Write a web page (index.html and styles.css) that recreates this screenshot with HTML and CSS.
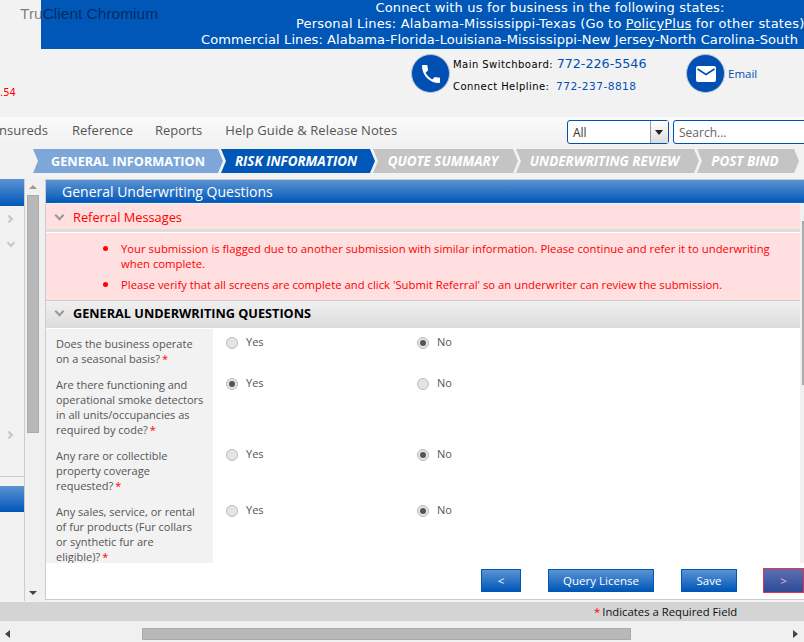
FILE: index.html
```html
<!DOCTYPE html>
<html lang="en">
<head>
    <meta charset="UTF-8">
    <title>General Underwriting Questions</title>
    <link rel="stylesheet" href="styles.css">
</head>
<body>
<div class="page">
    <div class="window-title">TruClient Chromium</div>

    <div class="banner">
        <div>Connect with us for business in the following states:</div>
        <div>Personal Lines: Alabama-Mississippi-Texas (Go to <u>PolicyPlus</u> for other states)</div>
        <div class="banner-wide">Commercial Lines: Alabama-Florida-Louisiana-Mississippi-New Jersey-North Carolina-South</div>
    </div>

    <div class="contact">
        <div class="stamp">.54</div>
        <div class="round-icon">
            <svg width="24" height="24" viewBox="0 0 24 24"><path fill="#fff" d="M6.6 10.8c1.4 2.8 3.8 5.100 6.600 6.600l2.200-2.200c.3-.3.700-.4 1-.2 1.100.4 2.300.6 3.600.6.600 0 1 .4 1 1V20c0 .6-.4 1-1 1C10.600 21 3 13.400 3 4c0-.6.4-1 1-1h3.500c.6 0 1 .4 1 1 0 1.300.2 2.500.6 3.600.1.300 0 .7-.2 1z"/></svg>
        </div>
        <div class="phones">
            <div class="phone-line">Main Switchboard: <span class="number-big">772-226-5546</span></div>
            <div class="phone-line">Connect Helpline: <span class="number">772-237-8818</span></div>
        </div>
        <div class="round-icon">
            <svg width="20" height="16" viewBox="0 0 20 16"><rect width="20" height="16" rx="2" fill="#fff"/><path d="M1.500 3l8.500 5.500L18.500 3" fill="none" stroke="#0050b3" stroke-width="1.600"/></svg>
        </div>
        <div class="email">Email</div>
    </div>

    <div class="menu">
        <span class="menu-item first">nsureds</span>
        <span class="menu-item second">Reference</span>
        <span class="menu-item">Reports</span>
        <span class="menu-item help">Help Guide &amp; Release Notes</span>
        <div class="combo">
            <span class="combo-text">All</span>
            <span class="combo-btn"></span>
        </div>
        <div class="search">Search...</div>
    </div>

    <div class="steps">
        <div class="step done">GENERAL INFORMATION</div>
        <div class="step current">RISK INFORMATION</div>
        <div class="step todo quote">QUOTE SUMMARY</div>
        <div class="step todo review">UNDERWRITING REVIEW</div>
        <div class="step todo bind">POST BIND</div>
    </div>

    <div class="main">
        <div class="side">
            <div class="side-panel">
                <div class="side-head"></div>
                <div class="chev-right one"></div>
                <div class="chev-down"></div>
                <div class="chev-right two"></div>
            </div>
            <div class="side-head second"></div>
        </div>

        <div class="vscroll">
            <span class="arrow-up"></span>
            <div class="vthumb"></div>
            <span class="arrow-down"></span>
        </div>

        <div class="content">
            <div class="content-title"><span>General Underwriting Questions</span></div>
            <div class="scroll-area">
                <div class="referral-head"><span class="chev-down small"></span>Referral Messages</div>
                <ul class="referral-list">
                    <li>Your submission is flagged due to another submission with similar information. Please continue and refer it to underwriting when complete.</li>
                    <li>Please verify that all screens are complete and click 'Submit Referral' so an underwriter can review the submission.</li>
                </ul>
                <div class="section-head"><span class="chev-down small"></span>GENERAL UNDERWRITING QUESTIONS</div>

                <div class="question">
                    <div class="q-label">Does the business operate on a seasonal basis?<span class="req">*</span></div>
                    <div class="q-opt"><span class="radio"></span>Yes</div>
                    <div class="q-opt"><span class="radio on"></span>No</div>
                </div>
                <div class="question">
                    <div class="q-label">Are there functioning and operational smoke detectors in all units/occupancies as required by code?<span class="req">*</span></div>
                    <div class="q-opt"><span class="radio on"></span>Yes</div>
                    <div class="q-opt"><span class="radio"></span>No</div>
                </div>
                <div class="question">
                    <div class="q-label">Any rare or collectible property coverage requested?<span class="req">*</span></div>
                    <div class="q-opt"><span class="radio"></span>Yes</div>
                    <div class="q-opt"><span class="radio on"></span>No</div>
                </div>
                <div class="question">
                    <div class="q-label">Any sales, service, or rental of fur products (Fur collars<br>or synthetic fur are<br>eligible)?<span class="req">*</span></div>
                    <div class="q-opt"><span class="radio"></span>Yes</div>
                    <div class="q-opt"><span class="radio on"></span>No</div>
                </div>
                <div class="inner-thumb"></div>
            </div>
            <div class="buttons">
                <button class="btn back">&lt;</button>
                <button class="btn query">Query License</button>
                <button class="btn save">Save</button>
                <button class="btn next">&gt;</button>
            </div>
        </div>
    </div>

    <div class="req-bar"><span class="req">*</span>Indicates a Required Field</div>

    <div class="hscroll">
        <span class="arrow-left"></span>
        <div class="hthumb"></div>
        <span class="arrow-right"></span>
    </div>
</div>
</body>
</html>
```

FILE: styles.css
```css
* {
    box-sizing: border-box;
}

html, body {
    margin: 0;
    padding: 0;
}

.page {
    position: relative;
    width: 804px;
    height: 642px;
    overflow: hidden;
    background: #f2f2f2;
    display: flex;
    flex-direction: column;
    font-family: "Open Sans", "Noto Sans", sans-serif;
}

.window-title {
    position: absolute;
    left: 20px;
    top: 5px;
    font-family: "Liberation Sans", sans-serif;
    font-size: 15.500px;
    color: rgba(0, 0, 0, 0.5);
}

/* top blue strip */
.banner {
    flex: none;
    height: 49px;
    margin-left: 41px;
    padding-left: 255px;
    background: #0057b8;
    color: #fff;
    font-family: "DejaVu Sans", sans-serif;
    font-size: 13px;
    line-height: 16px;
    text-align: center;
    white-space: nowrap;
    letter-spacing: 0.18px;
}

.banner-wide {
    margin-left: -255px;
    padding-right: 6px;
    text-align: right;
    letter-spacing: 0.1px;
}

.contact {
    flex: none;
    height: 68px;
    position: relative;
    display: flex;
    align-items: flex-start;
    padding: 5px 0 0 411px;
    font-family: "DejaVu Sans", sans-serif;
}

.stamp {
    position: absolute;
    left: 0;
    top: 38px;
    font-size: 10px;
    color: #f00;
}

.round-icon {
    width: 39px;
    height: 39px;
    border-radius: 50%;
    background: #0050b3;
    border: 1px solid #b8c4d4;
    display: flex;
    align-items: center;
    justify-content: center;
    flex: none;
}

.phones {
    width: 233px;
    margin-left: 3px;
    color: #000;
    font-size: 10px;
    letter-spacing: 0.45px;
}

.phone-line {
    height: 22px;
    line-height: 20px;
    white-space: nowrap;
}

.number-big {
    font-size: 12.700px;
    letter-spacing: 0;
    color: #0050b3;
}

.number {
    margin-left: 3px;
    font-size: 10.600px;
    color: #0050b3;
}

.email {
    margin: 12px 0 0 3px;
    font-family: "Open Sans", sans-serif;
    font-size: 11.500px;
    color: #0050b3;
}

.menu {
    flex: none;
    height: 26px;
    display: flex;
    align-items: center;
    background: linear-gradient(#fafafa, #f2f2f2);
    font-size: 13px;
    color: #555;
    white-space: nowrap;
}

.menu-item {
    margin-right: 23px;
}

.menu-item.first {
    margin-left: -1px;
    margin-right: 24px;
}

.menu-item.second {
    margin-right: 22px;
}

.menu-item.help {
    letter-spacing: 0.1px;
}

.combo {
    align-self: flex-start;
    flex: none;
    width: 102px;
    height: 24px;
    margin: 3px 4px 0 auto;
    display: flex;
    background: #fff;
    border: 1px solid #0050b3;
    border-radius: 3px;
    color: #333;
    font-size: 12px;
}

.combo-text {
    flex: 1;
    padding: 3px 0 0 5px;
}

.combo-btn {
    width: 18px;
    background: linear-gradient(#fff, #ddd);
    border-left: 1px solid #999;
    position: relative;
}

.combo-btn::after {
    content: "";
    position: absolute;
    left: 4px;
    top: 9px;
    border: 4px solid transparent;
    border-top: 5px solid #222;
}

/* runs past the right edge of the window */
.search {
    align-self: flex-start;
    flex: none;
    width: 140px;
    height: 24px;
    margin: 3px -9px 0 0;
    padding: 3px 0 0 5px;
    background: #fff;
    border: 1px solid #0050b3;
    border-radius: 3px;
    color: #666;
    font-size: 12px;
}

.steps {
    flex: none;
    height: 30px;
    margin-top: 6px;
    display: flex;
    padding-left: 33px;
}

.step {
    flex: none;
    height: 24px;
    margin-right: -2px;
    padding-right: 4px;
    line-height: 24px;
    font-size: 13.400px;
    font-style: italic;
    font-weight: 700;
    color: #fff;
    white-space: nowrap;
    text-align: center;
    clip-path: polygon(0 0, calc(100% - 5px) 0, 100% 50%, calc(100% - 5px) 100%, 0 100%, 5px 50%);
}

.step.done {
    width: 190px;
    padding-right: 0;
    background: #7da7d9;
    font-size: 12.700px;
    font-style: normal;
}

.step.current {
    width: 154px;
    background: #0057b8;
}

.step.todo {
    background: #c4c4c4;
}

.step.quote {
    width: 145px;
    padding-right: 5px;
}

.step.review {
    width: 183px;
    padding-right: 6px;
}

.step.bind {
    width: 102px;
    padding-right: 6px;
}

.main {
    flex: none;
    height: 422px;
    display: flex;
}

.side {
    width: 24px;
    flex: none;
}

.side-panel {
    height: 298px;
    border-bottom: 1px solid #ccc;
    position: relative;
}

.side-head {
    height: 27px;
    background: linear-gradient(#5b93d3, #0057b8);
}

.side-head.second {
    height: 26px;
    margin-top: 9px;
}

.chev-right,
.chev-down {
    position: absolute;
    width: 6px;
    height: 6px;
    border-right: 2px solid #c8c8c8;
    border-bottom: 2px solid #c8c8c8;
}

.chev-right {
    left: 6px;
    transform: rotate(-45deg);
}

.chev-right.one {
    top: 37px;
}

.chev-right.two {
    top: 253px;
}

.chev-down {
    left: 8px;
    top: 61px;
    transform: rotate(45deg);
}

.chev-down.small {
    position: static;
    display: inline-block;
    width: 7px;
    height: 7px;
    margin: 0 10px 3px 10px;
    border-color: #999;
}

.vscroll {
    width: 21px;
    flex: none;
    position: relative;
    border-left: 1px solid #ccc;
    background: #f0f0f0;
}

.vthumb {
    position: absolute;
    left: 2px;
    top: 16px;
    width: 12px;
    height: 238px;
    background: #b8b8b8;
    border: 1px solid #aaa;
}

.arrow-up,
.arrow-down,
.arrow-left,
.arrow-right {
    position: absolute;
    width: 0;
    height: 0;
    border: 4px solid transparent;
}

.arrow-up {
    left: 4px;
    top: 2px;
    border-bottom: 4px solid #999;
}

.arrow-down {
    left: 4px;
    bottom: 2px;
    border-top: 4px solid #444;
}

.content {
    flex: 1;
    min-width: 0;
    margin-bottom: 1px;
    background: #fff;
    border-top: 1px solid #ccc;
    border-left: 1px solid #ccc;
    border-bottom: 1px solid #ccc;
    display: flex;
    flex-direction: column;
}

.content-title {
    flex: none;
    height: 24px;
    padding-left: 8px;
    background: linear-gradient(#5b93d3, #0057b8);
    color: #fff;
    font-size: 14px;
    line-height: 24px;
    border-bottom: 1px solid #f0f0f0;
}

.content-title span {
    display: block;
    height: 23px;
    padding-left: 8px;
    border-bottom: 1px solid #0b63c4;
}

.scroll-area {
    position: relative;
    flex: none;
    height: 359px;
    overflow: hidden;
    padding-right: 4px;
    background: #f0f0f0;
}

.inner-thumb {
    position: absolute;
    right: 0;
    top: 17px;
    width: 2px;
    height: 164px;
    background: #aaa;
}

.referral-head {
    height: 28px;
    background: #ffdfdf;
    color: #f00;
    font-size: 12.800px;
    line-height: 26px;
    border-bottom: 3px solid #ddd;
}

.referral-list {
    list-style: none;
    margin: 0;
    height: 68px;
    padding: 8px 20px 0 75px;
    background: #ffdfdf;
    border-top: 1px solid #fff;
    color: #f00;
    font-size: 11.300px;
    line-height: 15px;
}

.referral-list li {
    position: relative;
    margin-bottom: 6px;
}

.referral-list li::before {
    content: "";
    position: absolute;
    left: -18px;
    top: 5px;
    width: 5px;
    height: 5px;
    border-radius: 50%;
    background: #f00;
}

.section-head {
    height: 29px;
    border-top: 1px solid #ccc;
    border-bottom: 1px solid #fff;
    background: linear-gradient(#f0f0f0, #dcdcdc);
    color: #000;
    font-size: 12.700px;
    font-weight: 700;
    line-height: 25px;
    white-space: nowrap;
}

.question {
    display: flex;
    background: #fff;
}

.q-label {
    width: 167px;
    flex: none;
    padding: 7px 7px 4px 10px;
    background: #f2f2f2;
    color: #555;
    font-size: 11px;
    line-height: 15px;
}

.req {
    color: #f00;
    margin-left: 2px;
}

.q-opt {
    width: 191px;
    padding: 5px 0 0 13px;
    color: #555;
    font-size: 11px;
    line-height: 15px;
    display: flex;
    align-items: flex-start;
}

.radio {
    width: 12px;
    height: 12px;
    margin: 3px 8px 0 0;
    border-radius: 50%;
    border: 1px solid #bbb;
    background: #e4e4e4;
    position: relative;
}

.radio.on::after {
    content: "";
    position: absolute;
    left: 2px;
    top: 2px;
    width: 6px;
    height: 6px;
    border-radius: 50%;
    background: #555;
}

.buttons {
    flex: 1;
    display: flex;
    align-items: flex-start;
    gap: 27px;
    padding: 6px 0 0 435px;
    white-space: nowrap;
}

.btn {
    flex: none;
    height: 23px;
    padding: 0;
    background: linear-gradient(#5b93d3, #0057b8);
    border: 1px solid #0057b8;
    color: #fff;
    font-family: inherit;
    font-size: 11.500px;
}

.btn.back {
    width: 40px;
}

.btn.query {
    width: 106px;
}

.btn.save {
    width: 56px;
}

.btn.next {
    width: 41px;
    height: 25px;
    margin: -1px 0 0 -1px;
    background: linear-gradient(#5b6fb3, #2f4a96);
    border: 1px solid #e8324a;
    color: #f4b8c8;
}

.req-bar {
    flex: none;
    height: 19px;
    margin-top: 1px;
    background: #d4d4d4;
    color: #111;
    font-size: 11.300px;
    line-height: 19px;
    padding-left: 592px;
    white-space: nowrap;
}

.req-bar .req {
    margin: 0 2px 0 2px;
}

.hscroll {
    flex: 1;
    position: relative;
    background: #f0f0f0;
}

.hthumb {
    position: absolute;
    left: 142px;
    top: 7px;
    width: 489px;
    height: 12px;
    background: #b8b8b8;
    border: 1px solid #aaa;
}

.arrow-left {
    left: 1px;
    top: 9px;
    border-right: 5px solid #444;
}

.arrow-right {
    right: 2px;
    top: 9px;
    border-left: 5px solid #444;
}
```
